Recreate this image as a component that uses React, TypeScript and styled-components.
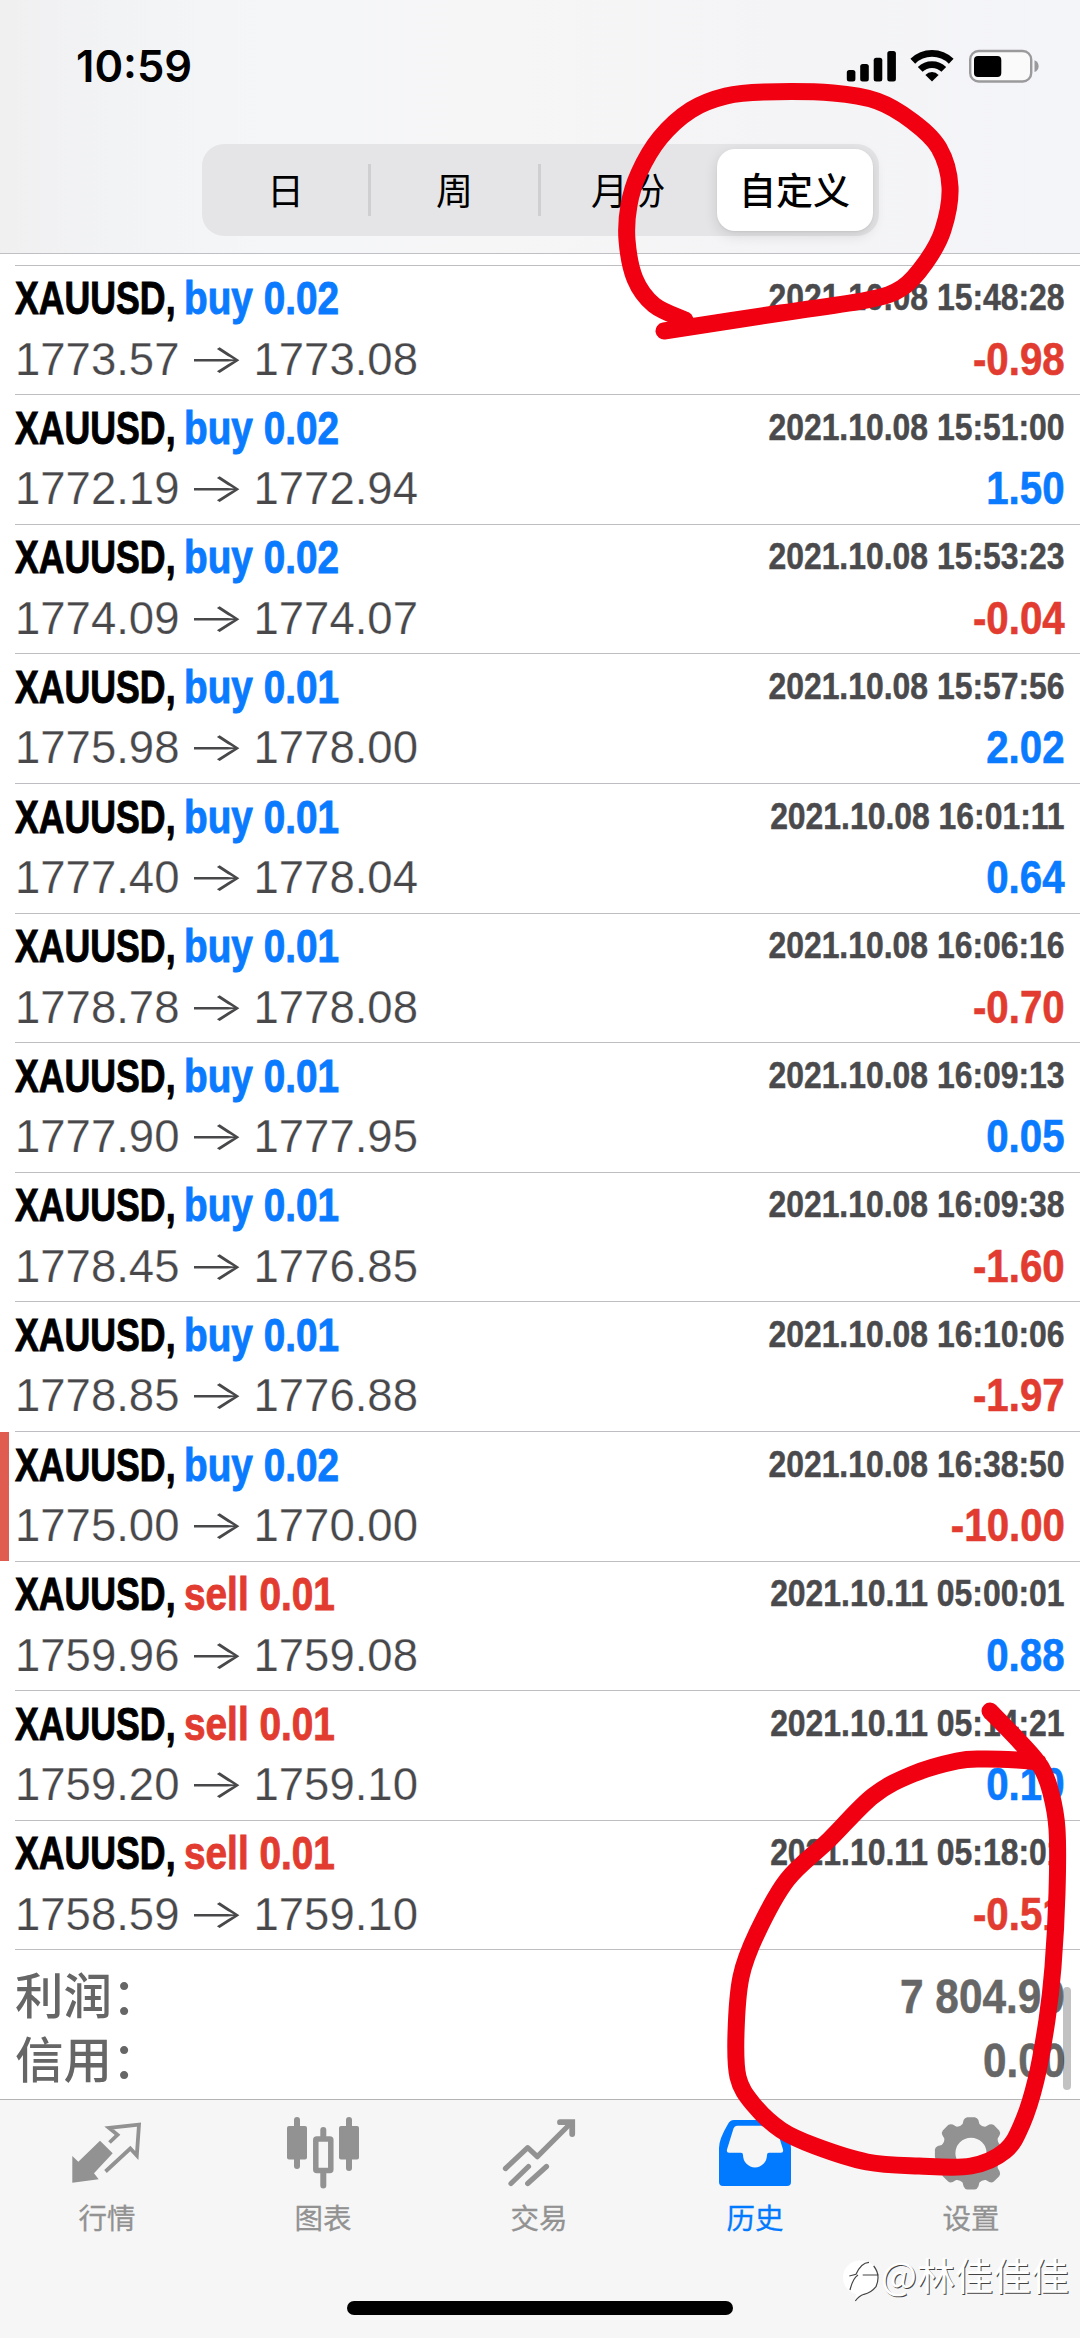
import React from "react";
import styled, { createGlobalStyle, css } from "styled-components";

const GlobalStyle = createGlobalStyle`
  * { box-sizing: border-box; }
  html, body { margin: 0; padding: 0; background: #fff; }
  body { font-family: "Liberation Sans", "Noto Sans CJK SC", sans-serif; }
`;

const BLUE = "#0a7aff";
const RED = "#e23b30";
const GREY = "#929292";

const Screen = styled.div`
  position: relative;
  width: 1080px;
  height: 2338px;
  display: flex;
  flex-direction: column;
  background: #fff;
  overflow: hidden;
`;

const Header = styled.header`
  flex: none;
  height: 254px;
  border-bottom: 1.5px solid #bfc0c3;
  background: linear-gradient(90deg, #f0f0f1 0%, #f3f4f6 15%, #f5f6f8 25%, #f6f6f7 45%, #f4f4f6 75%, #f4f5f9 100%);
  display: flex;
  flex-direction: column;
  align-items: center;
`;

const StatusBar = styled.div`
  width: 100%;
  height: 144px;
  padding: 0 41px 12px 76px;
  display: flex;
  align-items: center;
  justify-content: space-between;
`;

const Clock = styled.span`
  font: 600 43.5px/50px Inter, sans-serif;
  color: #000;
`;

const StatusIcons = styled.svg`
  display: block;
  width: 193px;
  height: 34px;
`;

const Segments = styled.div`
  width: 677px;
  height: 92px;
  border-radius: 22px;
  background: #e5e5e7;
  display: flex;
  align-items: center;
  padding: 5px 6px 5px 0;
`;

const Segment = styled.div<{ $width: number; $active?: boolean; $divider?: boolean }>`
  position: relative;
  width: ${(p) => p.$width}px;
  height: 82px;
  padding-bottom: 2px;
  display: flex;
  align-items: center;
  justify-content: center;
  font: ${(p) => (p.$active ? 500 : 400)} 37px/54px "Noto Sans CJK SC", sans-serif;
  color: #000;
  ${(p) =>
    p.$active &&
    css`
      background: #fff;
      border-radius: 18px;
      box-shadow: 0 4px 14px rgba(0, 0, 0, 0.13), 0 1px 2px rgba(0, 0, 0, 0.05);
    `}
  ${(p) =>
    p.$divider &&
    css`
      &::after {
        content: "";
        position: absolute;
        right: -1px;
        top: 15px;
        height: 52px;
        width: 2.5px;
        background: #cfcfd2;
      }
    `}
`;

const List = styled.main`
  flex: none;
  height: 1844.5px;
  padding-top: 10.6px;
  position: relative;
`;

const Row = styled.article<{ $marked?: boolean }>`
  height: 129.6px;
  display: flex;
  position: relative;
  padding-left: 15px;
  ${(p) =>
    p.$marked &&
    css`
      &::before {
        content: "";
        position: absolute;
        left: 0;
        top: 1px;
        bottom: 0;
        width: 9px;
        background: #e05c50;
      }
    `}
`;

const RowBody = styled.div`
  flex: 1;
  border-top: 1.5px solid #bebec2;
  padding: 7.6px 15px 0 0;
  display: flex;
  flex-direction: column;
`;

const Line = styled.div`
  display: flex;
  justify-content: space-between;
  align-items: baseline;
  height: 59.4px;
  white-space: nowrap;
`;

const Deal = styled.div`
  display: flex;
  font-weight: 700;
  font-size: 45.5px;
  line-height: 52px;
  -webkit-text-stroke: 0.9px currentColor;
`;

const Symbol = styled.span`
  width: 169px;
  color: #000;
  transform: scaleX(0.784);
  transform-origin: left;
`;

const Action = styled.span<{ $color: string }>`
  color: ${(p) => p.$color};
  transform: scaleX(0.852);
  transform-origin: left;
`;

const Stamp = styled.time`
  font-weight: 700;
  font-size: 37px;
  line-height: 44px;
  color: #4a4a4d;
  -webkit-text-stroke: 0.5px currentColor;
  transform: translateY(-4.2px) scaleX(0.862);
  transform-origin: right;
`;

const Prices = styled.div`
  display: flex;
  align-items: baseline;
  font-size: 45.5px;
  line-height: 52px;
  color: #48484b;
  -webkit-text-stroke: 0.25px #fff;
`;

const Arrow = styled.span`
  width: 74px;
  text-align: center;
  font: 300 45px/52px Inter, sans-serif;
  -webkit-text-stroke: 0;
  transform: scale(1.38, 0.9);
`;

const Profit = styled.span<{ $color: string }>`
  font-weight: 700;
  font-size: 45.5px;
  line-height: 52px;
  color: ${(p) => p.$color};
  -webkit-text-stroke: 0.6px currentColor;
  transform: scaleX(0.885);
  transform-origin: right;
`;

const Summary = styled.section`
  margin-left: 15px;
  border-top: 1.5px solid #bebec2;
  padding: 13px 15px 0 0;
  color: #666;
`;

const SummaryLine = styled.div`
  display: flex;
  justify-content: space-between;
  align-items: baseline;
  height: 63.2px;
`;

const SummaryLabel = styled.span`
  font: 500 48.5px/60px "Noto Sans CJK SC", sans-serif;
`;

const SummaryValue = styled.span`
  font-weight: 700;
  font-size: 48px;
  line-height: 60px;
  -webkit-text-stroke: 0.5px currentColor;
  transform: translateY(-1px) scaleX(0.882);
  transform-origin: right;
`;

const Scrollbar = styled.div`
  position: absolute;
  right: 9px;
  bottom: 9px;
  width: 8px;
  height: 103px;
  border-radius: 4px;
  background: rgba(0, 0, 0, 0.24);
`;

const TabBar = styled.nav`
  flex: 1;
  border-top: 1.5px solid #b4b4b4;
  background: #f6f6f6;
  display: flex;
  flex-direction: column;
  align-items: center;
`;

const Tabs = styled.div`
  width: 100%;
  height: 201px;
  padding-top: 10.5px;
  display: grid;
  grid-template-columns: repeat(5, 1fr);
`;

const Tab = styled.div<{ $active?: boolean }>`
  display: flex;
  flex-direction: column;
  align-items: center;
  color: ${(p) => (p.$active ? "#027aff" : GREY)};
  font: 400 28.5px/40px "Noto Sans CJK SC", sans-serif;
  gap: 7px;
`;

const TabLabel = styled.span`
  margin-right: 2px;
  -webkit-text-stroke: 0.3px currentColor;
`;

const TabIcon = styled.svg`
  display: block;
  width: 80px;
  height: 80px;
`;

const HomeIndicator = styled.div`
  width: 386px;
  height: 14px;
  border-radius: 7px;
  background: #000;
`;

const Watermark = styled.div`
  position: absolute;
  right: 11px;
  top: 2246px;
  display: flex;
  align-items: center;
  color: #fff;
  font: 400 38px/56px "Noto Sans CJK SC", sans-serif;
  text-shadow: 1px 1px 0.5px #444;
`;

const WatermarkLogo = styled.svg`
  width: 40px;
  height: 44px;
  margin-top: 11px;
`;

const Ink = styled.svg`
  position: absolute;
  inset: 0;
  width: 1080px;
  height: 2338px;
  pointer-events: none;
`;

type Trade = [kind: "buy" | "sell", lot: string, from: string, to: string, time: string, profit: string];

const trades: Trade[] = [
  ["buy", "0.02", "1773.57", "1773.08", "2021.10.08 15:48:28", "-0.98"],
  ["buy", "0.02", "1772.19", "1772.94", "2021.10.08 15:51:00", "1.50"],
  ["buy", "0.02", "1774.09", "1774.07", "2021.10.08 15:53:23", "-0.04"],
  ["buy", "0.01", "1775.98", "1778.00", "2021.10.08 15:57:56", "2.02"],
  ["buy", "0.01", "1777.40", "1778.04", "2021.10.08 16:01:11", "0.64"],
  ["buy", "0.01", "1778.78", "1778.08", "2021.10.08 16:06:16", "-0.70"],
  ["buy", "0.01", "1777.90", "1777.95", "2021.10.08 16:09:13", "0.05"],
  ["buy", "0.01", "1778.45", "1776.85", "2021.10.08 16:09:38", "-1.60"],
  ["buy", "0.01", "1778.85", "1776.88", "2021.10.08 16:10:06", "-1.97"],
  ["buy", "0.02", "1775.00", "1770.00", "2021.10.08 16:38:50", "-10.00"],
  ["sell", "0.01", "1759.96", "1759.08", "2021.10.11 05:00:01", "0.88"],
  ["sell", "0.01", "1759.20", "1759.10", "2021.10.11 05:14:21", "0.10"],
  ["sell", "0.01", "1758.59", "1759.10", "2021.10.11 05:18:01", "-0.51"],
];

type Point = [number, number];

function smooth(points: Point[]): string {
  let d = `M${points[0][0]} ${points[0][1]}`;
  for (let i = 0; i < points.length - 1; i++) {
    const a = points[Math.max(i - 1, 0)];
    const b = points[i];
    const c = points[i + 1];
    const e = points[Math.min(i + 2, points.length - 1)];
    d += ` C${b[0] + (c[0] - a[0]) / 6} ${b[1] + (c[1] - a[1]) / 6} ${c[0] - (e[0] - b[0]) / 6} ${c[1] - (e[1] - b[1]) / 6} ${c[0]} ${c[1]}`;
  }
  return d;
}

const upperLoop: Point[] = [
  [685, 320], [654, 305], [635, 279], [627, 240], [629, 205], [639, 173], [660, 138], [691, 110],
  [726, 96], [764, 92], [833, 93], [877, 101], [912, 121], [939, 148], [950, 187], [943, 230],
  [926, 262], [902, 288], [867, 300], [781, 313], [664, 331],
];

const lowerLoop: Point[] = [
  [990, 1711], [1020, 1742], [1041, 1767], [1051, 1793], [1057, 1829], [1057, 1893], [1053, 1967],
  [1047, 2020], [1036, 2080], [1022, 2124], [1005, 2151], [971, 2166], [919, 2166], [867, 2162],
  [815, 2146], [781, 2130], [753, 2104], [738, 2077], [736, 2033], [741, 1977], [757, 1933],
  [787, 1880], [829, 1840], [873, 1796], [913, 1774], [957, 1761], [983, 1759], [1017, 1760], [1038, 1762],
];

const gear = (() => {
  const parts: string[] = [];
  for (let i = 0; i < 8; i++) {
    const at = (deg: number, r: number) => {
      const t = ((i * 45 + deg - 90) * Math.PI) / 180;
      return `${(39 + r * Math.cos(t)).toFixed(2)} ${(43.3 + r * Math.sin(t)).toFixed(2)}`;
    };
    parts.push(
      `${i ? "L" : "M"}${at(-16, 30.5)} L${at(-12.5, 34)} Q${at(-10, 36.3)} ${at(-6, 36.3)} L${at(6, 36.3)} Q${at(10, 36.3)} ${at(12.5, 34)} L${at(16, 30.5)} Q${at(22.5, 28.5)} ${at(29, 30.5)}`
    );
  }
  return parts.join(" ") + "Z M54.6 43.3 A15.6 15.6 0 1 0 23.4 43.3 A15.6 15.6 0 1 0 54.6 43.3Z";
})();

const tabs = [
  {
    label: "行情",
    icon: (
      <>
        <path d="M4.3 46 L10.3 51.7 L32 30.7 L44.7 43.3 L26 63.3 L30.7 69.3 L4.3 72.7Z" fill="currentColor" />
        <path d="M41.5 32.5 L49.5 24.8 L41 17.8 L71 14.6 L68.8 45.5 L62.3 38.5 L37.5 61.5" fill="none" stroke="currentColor" strokeWidth="3.8" />
      </>
    ),
  },
  {
    label: "图表",
    icon: (
      <g fill="currentColor">
        <rect x="3" y="16" width="20" height="33.5" rx="2" />
        <rect x="10" y="7" width="6" height="52" rx="3" />
        <rect x="55" y="16" width="20" height="33.5" rx="2" />
        <rect x="62" y="7" width="6" height="54" rx="3" />
        <rect x="36.3" y="17" width="6" height="12" rx="3" />
        <rect x="36.3" y="60" width="6" height="18.5" rx="3" />
        <rect x="31.8" y="29" width="15" height="31.5" rx="1" fill="none" stroke="currentColor" strokeWidth="5.5" />
      </g>
    ),
  },
  {
    label: "交易",
    icon: (
      <g fill="none" stroke="currentColor" strokeWidth="5.2">
        <path d="M5.5 58.5 L27.7 37.7 L37.3 46.7 L71 13" strokeLinecap="round" strokeLinejoin="round" />
        <path d="M60 12.2 H72.2 V24" strokeLinecap="round" strokeWidth="5.8" />
        <path d="M11 73.5 L28.5 56.5 M27.7 73.5 L46.5 56.5" strokeLinecap="round" />
      </g>
    ),
  },
  {
    label: "历史",
    active: true,
    icon: (
      <path
        fill="currentColor"
        fillRule="evenodd"
        d="M18 10 H60 Q64 10 66 14 Q75 30 75 38 V72 Q75 76 71 76 H7 Q3 76 3 72 V38 Q3 29 12 14 Q14 10 18 10Z M21 15.7 Q18.5 15.7 17.5 18.5 L11 39.5 Q10.3 42.7 13 42.7 H25 Q27 42.7 27 45 A12 12.5 0 0 0 51 45 Q51 42.7 53 42.7 H65 Q67.7 42.7 67 39.5 L60.5 18.5 Q59.5 15.7 57 15.7Z"
      />
    ),
  },
  { label: "设置", icon: <path fill="currentColor" fillRule="evenodd" d={gear} /> },
];

function TradeRow({ trade, marked }: { trade: Trade; marked: boolean }) {
  const [kind, lot, from, to, time, profit] = trade;
  return (
    <Row $marked={marked}>
      <RowBody>
        <Line>
          <Deal>
            <Symbol>XAUUSD,</Symbol>
            <Action $color={kind === "buy" ? BLUE : RED}>
              {kind} {lot}
            </Action>
          </Deal>
          <Stamp>{time}</Stamp>
        </Line>
        <Line>
          <Prices>
            {from}
            <Arrow>→</Arrow>
            {to}
          </Prices>
          <Profit $color={profit.startsWith("-") ? RED : BLUE}>{profit}</Profit>
        </Line>
      </RowBody>
    </Row>
  );
}

export default function App() {
  return (
    <Screen>
      <GlobalStyle />
      <Header>
        <StatusBar>
          <Clock>10:59</Clock>
          <StatusIcons viewBox="846 49 193 34">
            <rect x="846.8" y="70" width="8.6" height="11.5" rx="2.5" />
            <rect x="860.2" y="64" width="8.6" height="17.5" rx="2.5" />
            <rect x="873.7" y="57.7" width="8.6" height="23.8" rx="2.5" />
            <rect x="887.3" y="51" width="8.6" height="30.5" rx="2.5" />
            <g fill="none" stroke="#000" strokeWidth="6.8">
              <path d="M912.8 61.2 A27.5 27.5 0 0 1 951.2 61.2" />
              <path d="M920.2 69.4 A17 17 0 0 1 943.8 69.4" />
            </g>
            <path d="M932 81.5 L925.4 75 A9 9 0 0 1 938.6 75Z" />
            <rect x="970.2" y="51" width="61" height="30.5" rx="8.5" fill="#fafafb" stroke="#9a9a9c" strokeWidth="2.4" />
            <rect x="974" y="56" width="27.3" height="21" rx="4" />
            <path d="M1034.5 60.3 Q1038.6 62 1038.6 66.2 Q1038.6 70.5 1034.5 72Z" fill="#9a9a9c" />
          </StatusIcons>
        </StatusBar>
        <Segments>
          <Segment $width={168} $divider>日</Segment>
          <Segment $width={170} $divider>周</Segment>
          <Segment $width={177}>月份</Segment>
          <Segment $width={156} $active>自定义</Segment>
        </Segments>
      </Header>
      <List>
        {trades.map((t, i) => (
          <TradeRow key={i} trade={t} marked={i === 9} />
        ))}
        <Summary>
          <SummaryLine>
            <SummaryLabel>利润：</SummaryLabel>
            <SummaryValue>7 804.90</SummaryValue>
          </SummaryLine>
          <SummaryLine>
            <SummaryLabel>信用：</SummaryLabel>
            <SummaryValue>0.00</SummaryValue>
          </SummaryLine>
        </Summary>
        <Scrollbar />
      </List>
      <TabBar>
        <Tabs>
          {tabs.map((t) => (
            <Tab key={t.label} $active={t.active}>
              <TabIcon viewBox="0 0 80 80">{t.icon}</TabIcon>
              <TabLabel>{t.label}</TabLabel>
            </Tab>
          ))}
        </Tabs>
        <HomeIndicator />
      </TabBar>
      <Watermark>
        <WatermarkLogo viewBox="0 0 40 44">
          <path d="M20 2.5 A17 17 0 0 1 36 26 Q32 36 23 37 L14 43 L15 36 A17 17 0 0 1 20 2.5Z" fill="#fff" />
          <path
            d="M8.3 18 L15 16.3 Q20 4.7 28 4.3 M9 32 Q12 20 17 17 M21.7 17 H37.7 M32.7 8 Q40 17 35 28.7 Q30 35 23 36.3 Q18 38 14.3 43"
            fill="none"
            stroke="#444"
            strokeWidth="1.2"
          />
        </WatermarkLogo>
        @林佳佳佳
      </Watermark>
      <Ink viewBox="0 0 1080 2338">
        <g fill="none" stroke="#f00010" strokeWidth="17" strokeLinecap="round" strokeLinejoin="round">
          <path d={smooth(upperLoop)} />
          <path d={smooth(lowerLoop)} />
        </g>
      </Ink>
    </Screen>
  );
}
